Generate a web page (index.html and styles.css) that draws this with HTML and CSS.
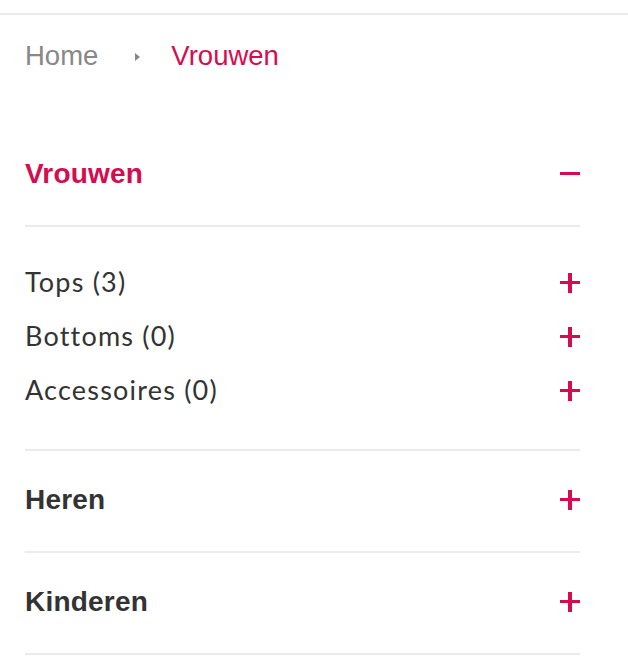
FILE: index.html
```html
<!DOCTYPE html>
<html lang="nl">
<head>
  <meta charset="UTF-8" />
  <meta name="viewport" content="width=device-width, initial-scale=1.0"/>
  <title>Vrouwen</title>
  <link rel="stylesheet" href="styles.css">
</head>
<body>

  <div class="topbar"></div>

  <div class="page">
    <nav class="breadcrumb">
      <a href="#" class="crumb">Home</a>
      <span class="sep"></span>
      <span class="crumb current">Vrouwen</span>
    </nav>

    <div class="filters">
      <div class="group open">
        <div class="group-head">
          <span class="group-title">Vrouwen</span>
          <span class="toggle minus"></span>
        </div>
        <ul class="sublist">
          <li><span class="label">Tops (3)</span><span class="toggle plus"></span></li>
          <li><span class="label">Bottoms (0)</span><span class="toggle plus"></span></li>
          <li><span class="label">Accessoires (0)</span><span class="toggle plus"></span></li>
        </ul>
      </div>

      <div class="group">
        <div class="group-head">
          <span class="group-title">Heren</span>
          <span class="toggle plus"></span>
        </div>
      </div>

      <div class="group">
        <div class="group-head">
          <span class="group-title">Kinderen</span>
          <span class="toggle plus"></span>
        </div>
      </div>
    </div>
  </div>

</body>
</html>
```

FILE: styles.css
```css
body { margin: 0; background: #fff; font-family: "Liberation Sans", Arial, sans-serif; color: #333; }
.topbar { height: 2px; margin-top: 13px; background: #ebebeb; }
.page { width: 555px; padding-left: 25px; }

.breadcrumb { display: flex; align-items: center; margin-top: 25px; height: 32px; font-size: 27.5px; line-height: 32px; }
.crumb { color: #888; text-decoration: none; }
.crumb.current { color: #d50c50; }
.sep { width: 0; height: 0; margin: 2px 31px 0 37px; border-left: 5px solid #888; border-top: 4px solid transparent; border-bottom: 4px solid transparent; }

.filters { margin-top: 53px; }
.group { border-bottom: 2px solid #ebebeb; }
.group-head { display: flex; justify-content: space-between; align-items: center; padding: 33px 0 35px; font-size: 28px; line-height: 32px; font-weight: bold; letter-spacing: 0.2px; }
.group.open .group-head { border-bottom: 2px solid #ebebeb; }
.group.open .group-title { color: #d50c50; }

.sublist { list-style: none; margin: 0; padding: 29px 0 31px; }
.sublist li { display: flex; justify-content: space-between; align-items: center; height: 54px; font-family: "Lato", "Liberation Sans", sans-serif; font-size: 27px; letter-spacing: 1.2px; color: #333; }
.label { padding-bottom: 3px; }

.toggle { position: relative; width: 20px; height: 20px; }
.toggle::before, .toggle::after { content: ""; position: absolute; background: #d50c50; }
.toggle::before { left: 0; right: 0; top: 8px; height: 3px; }
.plus::after { top: 0; bottom: 0; left: 8px; width: 4px; }
```
